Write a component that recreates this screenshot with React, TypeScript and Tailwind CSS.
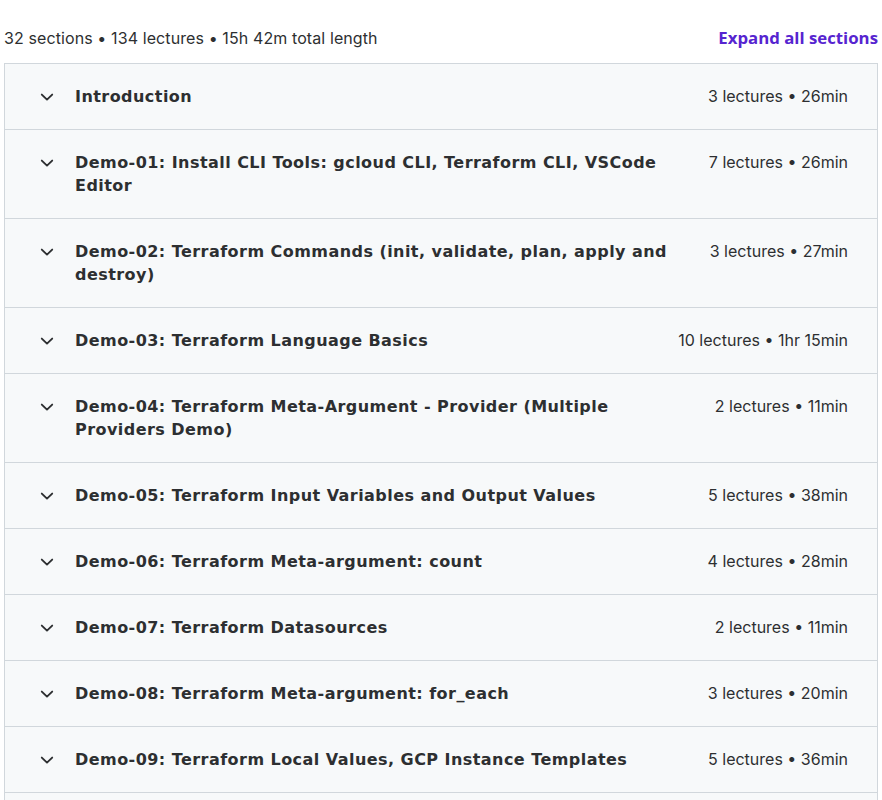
import React from 'react';

interface Section {
  title: string;
  meta: string;
}

const sections: Section[] = [
  { title: 'Introduction', meta: '3 lectures • 26min' },
  { title: 'Demo-01: Install CLI Tools: gcloud CLI, Terraform CLI, VSCode Editor', meta: '7 lectures • 26min' },
  { title: 'Demo-02: Terraform Commands (init, validate, plan, apply and destroy)', meta: '3 lectures • 27min' },
  { title: 'Demo-03: Terraform Language Basics', meta: '10 lectures • 1hr 15min' },
  { title: 'Demo-04: Terraform Meta-Argument - Provider (Multiple Providers Demo)', meta: '2 lectures • 11min' },
  { title: 'Demo-05: Terraform Input Variables and Output Values', meta: '5 lectures • 38min' },
  { title: 'Demo-06: Terraform Meta-argument: count', meta: '4 lectures • 28min' },
  { title: 'Demo-07: Terraform Datasources', meta: '2 lectures • 11min' },
  { title: 'Demo-08: Terraform Meta-argument: for_each', meta: '3 lectures • 20min' },
  { title: 'Demo-09: Terraform Local Values, GCP Instance Templates', meta: '5 lectures • 36min' },
  { title: 'Demo-10: Terraform Remote State Storage', meta: '4 lectures • 24min' },
];

function Chevron() {
  return (
    <svg className="w-4 h-4 flex-shrink-0 mt-[3.5px]" viewBox="0 0 16 16" fill="none">
      <path d="M2.8 5.6 L8 10.6 L13.2 5.6" stroke="#2d2f31" strokeWidth="1.9" strokeLinecap="round" strokeLinejoin="round" />
    </svg>
  );
}

export default function App() {
  return (
    <div className="min-h-screen bg-white px-1 font-['Inter',sans-serif] text-[#2d2f31]">
      {/* Summary line */}
      <div className="flex items-center justify-between pt-[26px] pb-[13px] leading-[24px]">
        <span className="text-[16px] tracking-[0.1px]">32 sections • 134 lectures • 15h 42m total length</span>
        <button className="font-['Open_Sans',sans-serif] text-[16.8px] font-bold text-[#5624d0]">Expand all sections</button>
      </div>

      {/* Curriculum */}
      <div className="border border-b-0 border-[#d1d7dc]">
        {sections.map(section => (
          <div
            key={section.title}
            className="flex items-start bg-[#f7f9fa] border-b border-[#d1d7dc] pl-[34px] pr-[29px] py-[21px] leading-[23px]"
          >
            <Chevron />
            <div className="flex-1 min-w-0 ml-5 font-['DejaVu_Sans',sans-serif] text-[16px] font-bold tracking-[0.45px]">
              {section.title}
            </div>
            <div className="flex-shrink-0 ml-6 text-[16px]">
              {section.meta}
            </div>
          </div>
        ))}
      </div>
    </div>
  );
}
